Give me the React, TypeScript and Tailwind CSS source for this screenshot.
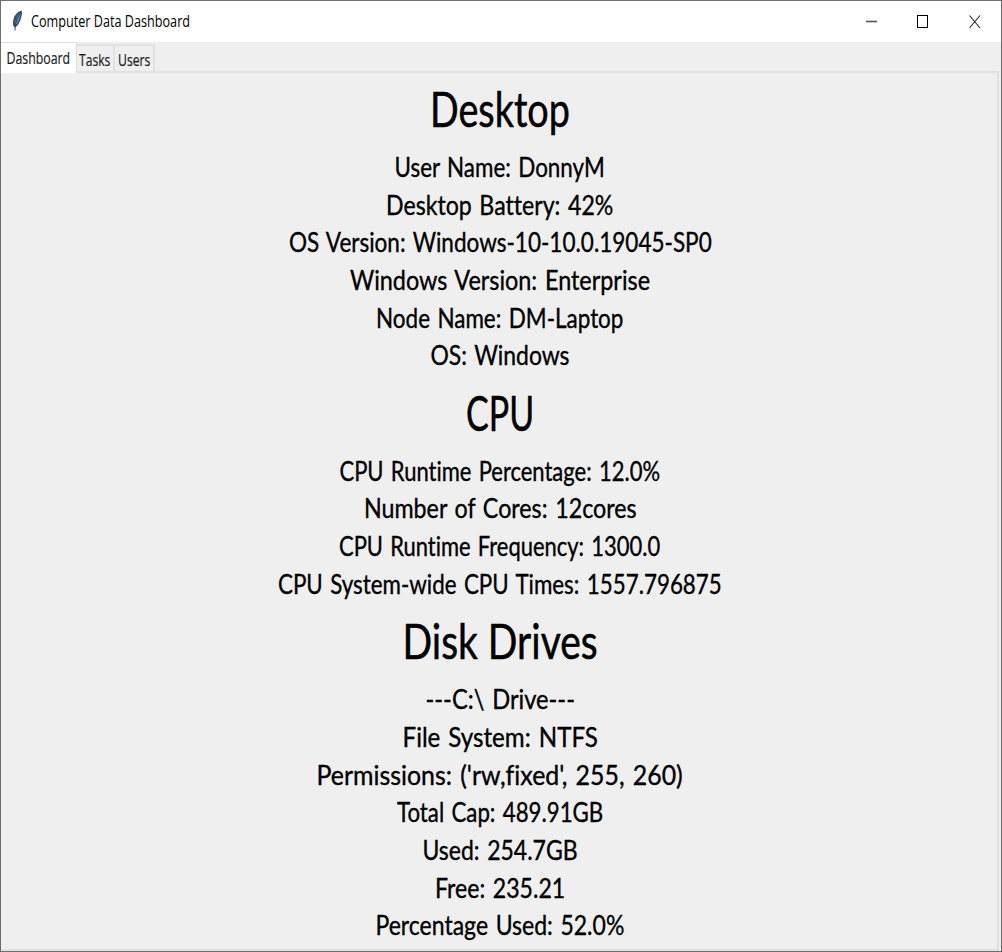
import { useLayoutEffect, useRef, useState } from "react";

type Line = [text: string, width: number];
type Section = { title: Line; lines: Line[] };

const sections: Section[] = [
  {
    title: ["Desktop", 140],
    lines: [
      ["User Name: DonnyM", 210],
      ["Desktop Battery: 42%", 227],
      ["OS Version: Windows-10-10.0.19045-SP0", 423],
      ["Windows Version: Enterprise", 300],
      ["Node Name: DM-Laptop", 247],
      ["OS: Windows", 139],
    ],
  },
  {
    title: ["CPU", 68],
    lines: [
      ["CPU Runtime Percentage: 12.0%", 321],
      ["Number of Cores: 12cores", 273],
      ["CPU Runtime Frequency: 1300.0", 321],
      ["CPU System-wide CPU Times: 1557.796875", 444],
    ],
  },
  {
    title: ["Disk Drives", 195],
    lines: [
      ["---C:\\ Drive---", 149],
      ["File System: NTFS", 195],
      ["Permissions: ('rw,fixed', 255, 260)", 366],
      ["Total Cap: 489.91GB", 206],
      ["Used: 254.7GB", 155],
      ["Free: 235.21", 130],
      ["Percentage Used: 52.0%", 249],
    ],
  },
];

/* Condenses a single line of text to the given width. */
function Fit({ text, width, className = "" }: { text: string; width: number; className?: string }) {
  const ref = useRef<HTMLSpanElement>(null);
  const [scale, setScale] = useState(1);
  useLayoutEffect(() => {
    const measure = () => {
      if (ref.current) setScale(width / ref.current.offsetWidth);
    };
    measure();
    document.fonts.ready.then(measure);
  }, [width]);
  return (
    <span className="flex justify-center" style={{ width }}>
      <span
        ref={ref}
        className={`inline-block shrink-0 whitespace-pre ${className}`}
        style={{ transform: `scaleX(${scale})` }}
      >
        {text}
      </span>
    </span>
  );
}

function Feather() {
  return (
    <svg className="h-[22px] w-[14px]" viewBox="0 0 14 22">
      <path d="M11.8 0.5 L8 2 L4.5 6 L3 11 L3.2 15.5 L5 17.5 L8 15 L10.5 10 L12 4 Z" fill="#3d4a58" />
      <path d="M10.3 2.5 L7.5 5.5 L5.2 11 L5 15 L7 14 L9.3 9.5 L10.5 5 Z" fill="#4f86c6" />
      <path d="M10.5 2.5 L7 9 L5.2 15 L5 20.5" fill="none" stroke="#2c3d50" strokeWidth="0.9" />
    </svg>
  );
}

export default function App() {
  return (
    <div className="flex h-[952px] w-[1002px] flex-col overflow-hidden border border-[#6d6d6d] bg-[#efefef] font-['Comic_Sans_MS','Lato',sans-serif] text-black [font-variant-ligatures:none]">
      <header className="flex h-[41px] shrink-0 items-center justify-between bg-white pl-[9px] font-['Open_Sans',sans-serif]">
        <div className="flex items-center gap-[7px] pb-[2px]">
          <Feather />
          <Fit text="Computer Data Dashboard" width={159} className="text-[15.5px] leading-5" />
        </div>
        <div className="flex h-full">
          <button className="flex w-[52px] items-center justify-center" aria-label="Minimize">
            <svg className="h-[14px] w-[14px]" viewBox="0 0 14 14">
              <path d="M2 6.5H13" stroke="#555" strokeWidth="1.6" />
            </svg>
          </button>
          <button className="flex w-[52px] items-center justify-center" aria-label="Maximize">
            <svg className="h-[14px] w-[14px]" viewBox="0 0 14 14">
              <rect x="1.5" y="0.5" width="10" height="12" fill="none" stroke="#000" />
            </svg>
          </button>
          <button className="flex w-[52px] items-center justify-center" aria-label="Close">
            <svg className="h-[14px] w-[14px]" viewBox="0 0 14 14">
              <path d="M1.5 0.5L12 13M12 0.5L1.5 13" stroke="#222" strokeWidth="1.1" />
            </svg>
          </button>
        </div>
      </header>

      <nav className="flex h-[31px] shrink-0 items-end font-['Open_Sans',sans-serif] text-[16px] text-[#1c1c1c] [-webkit-text-stroke:0.2px_#1c1c1c]">
        <div className="flex h-[31px] w-[76px] items-center justify-center border-t border-r border-[#dcdcdc] bg-white pb-[1px]">
          <Fit text="Dashboard" width={64} />
        </div>
        <div className="flex h-[29px] w-[38px] items-center justify-center border-t-2 border-r-2 border-b-2 border-[#e1e1e1] pt-[2px]">
          <Fit text="Tasks" width={31} />
        </div>
        <div className="flex h-[29px] w-[40px] items-center justify-center border-t-2 border-r-2 border-b-2 border-[#e1e1e1] pt-[2px]">
          <Fit text="Users" width={32} />
        </div>
        <div className="mr-[2px] h-[2px] flex-1 bg-[#e1e1e1]" />
      </nav>

      <main className="mr-[2px] flex min-h-0 flex-1 flex-col items-center border-r-2 border-b-2 border-[#e1e1e1] pl-[2px]">
        {sections.map((section) => (
          <section key={section.title[0]} className="flex flex-col items-center first:-mt-[3px]">
            <h1 className="flex h-[78px] items-center text-[48px] leading-[78px] [-webkit-text-stroke:0.5px_#000]">
              <Fit text={section.title[0]} width={section.title[1]} />
            </h1>
            {section.lines.map(([text, width]) => (
              <p
                key={text}
                className="flex h-[37.65px] items-center text-[27px] leading-[37.65px] [-webkit-text-stroke:0.35px_#000] [word-spacing:2px]"
              >
                <Fit text={text} width={width} />
              </p>
            ))}
          </section>
        ))}
      </main>
    </div>
  );
}
